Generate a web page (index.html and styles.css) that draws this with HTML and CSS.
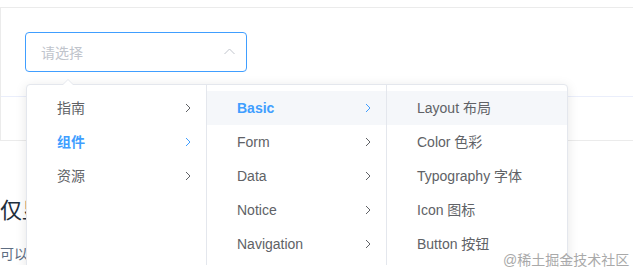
FILE: index.html
```html
<!DOCTYPE html>
<html lang="zh-CN">
<head>
  <meta charset="UTF-8" />
  <meta name="viewport" content="width=device-width, initial-scale=1" />
  <title>Cascader 级联选择器</title>
  <link rel="stylesheet" href="styles.css">
</head>
<body>

  <div class="demo-block">
    <div class="source">
      <div class="select">
        <div class="select-input">
          <span class="placeholder">请选择</span>
          <svg class="select-arrow" width="11" height="7" viewBox="0 0 11 7">
            <polyline points="0.5,6 5.5,1 10.5,6" fill="none" stroke="#c0c4cc" stroke-width="1" />
          </svg>
        </div>

        <div class="dropdown">
          <span class="popper-arrow"></span>
          <div class="menu">
            <div class="node">指南<svg class="chev" width="7" height="10" viewBox="0 0 7 10"><polyline points="1,1 5,5 1,9" /></svg></div>
            <div class="node active">组件<svg class="chev" width="7" height="10" viewBox="0 0 7 10"><polyline points="1,1 5,5 1,9" /></svg></div>
            <div class="node">资源<svg class="chev" width="7" height="10" viewBox="0 0 7 10"><polyline points="1,1 5,5 1,9" /></svg></div>
          </div>
          <div class="menu">
            <div class="node active hover">Basic<svg class="chev" width="7" height="10" viewBox="0 0 7 10"><polyline points="1,1 5,5 1,9" /></svg></div>
            <div class="node">Form<svg class="chev" width="7" height="10" viewBox="0 0 7 10"><polyline points="1,1 5,5 1,9" /></svg></div>
            <div class="node">Data<svg class="chev" width="7" height="10" viewBox="0 0 7 10"><polyline points="1,1 5,5 1,9" /></svg></div>
            <div class="node">Notice<svg class="chev" width="7" height="10" viewBox="0 0 7 10"><polyline points="1,1 5,5 1,9" /></svg></div>
            <div class="node">Navigation<svg class="chev" width="7" height="10" viewBox="0 0 7 10"><polyline points="1,1 5,5 1,9" /></svg></div>
          </div>
          <div class="menu">
            <div class="node hover">Layout 布局</div>
            <div class="node">Color 色彩</div>
            <div class="node">Typography 字体</div>
            <div class="node">Icon 图标</div>
            <div class="node">Button 按钮</div>
          </div>
        </div>
      </div>
    </div>
    <div class="control"></div>
  </div>

  <h3>仅显示最后一级</h3>
  <p>可以仅在输入框中显示选中项最后一级的标签</p>

  <div class="watermark">@稀土掘金技术社区</div>

</body>
</html>
```

FILE: styles.css
```css
body {
  margin: 0;
  font-family: "Liberation Sans", "Noto Sans CJK SC", sans-serif;
  font-size: 14px;
  color: #606266;
  background: #fff;
  overflow: hidden;
}
.demo-block {
  margin: 7px 0 0 0;
  border: 1px solid #ebebeb;
  border-right: none;
}
.source {
  padding: 24px;
}
.control {
  height: 43px;
  border-top: 1px solid #eaeefb;
}
.select {
  position: relative;
  width: 222px;
}
.select-input {
  display: flex;
  align-items: center;
  justify-content: space-between;
  height: 40px;
  box-sizing: border-box;
  padding: 0 11px 0 15px;
  border: 1px solid #409eff;
  border-radius: 4px;
}
.placeholder {
  color: #c0c4cc;
}
.select-arrow {
  margin-top: -2px;
}
.dropdown {
  position: absolute;
  top: 52px;
  left: 1px;
  display: flex;
  background: #fff;
  border: 1px solid #e4e7ed;
  border-radius: 4px;
  box-shadow: 0 2px 12px 0 rgba(0, 0, 0, 0.1);
  z-index: 10;
}
.popper-arrow {
  position: absolute;
  top: -6px;
  left: 35px;
  width: 0;
  height: 0;
  border: 6px solid transparent;
  border-top: 0;
  border-bottom-color: #e4e7ed;
}
.popper-arrow::after {
  content: "";
  position: absolute;
  top: 1px;
  left: -6px;
  border: 6px solid transparent;
  border-top: 0;
  border-bottom-color: #fff;
}
.menu {
  width: 180px;
  height: 187px;
  box-sizing: border-box;
  padding: 6px 0;
  border-right: 1px solid #e4e7ed;
}
.menu:last-child {
  border-right: none;
}
.node {
  position: relative;
  height: 34px;
  line-height: 34px;
  padding: 0 30px;
}
.node.hover {
  background: #f5f7fa;
}
.node.active {
  color: #409eff;
  font-weight: bold;
}
.chev {
  position: absolute;
  right: 14px;
  top: 12px;
}
.chev polyline {
  fill: none;
  stroke: #606266;
  stroke-width: 1;
}
.node.active .chev polyline {
  stroke: #409eff;
}
h3 {
  margin: 55px 0 0;
  font-size: 22px;
  line-height: 30px;
  font-weight: normal;
  color: #1f2f3d;
}
p {
  margin: 18px 0 0;
  line-height: 21px;
  color: #5e6d82;
}
.watermark {
  position: absolute;
  left: 503px;
  top: 249px;
  font-size: 14px;
  color: #a9a9a9;
  z-index: 20;
}
```
